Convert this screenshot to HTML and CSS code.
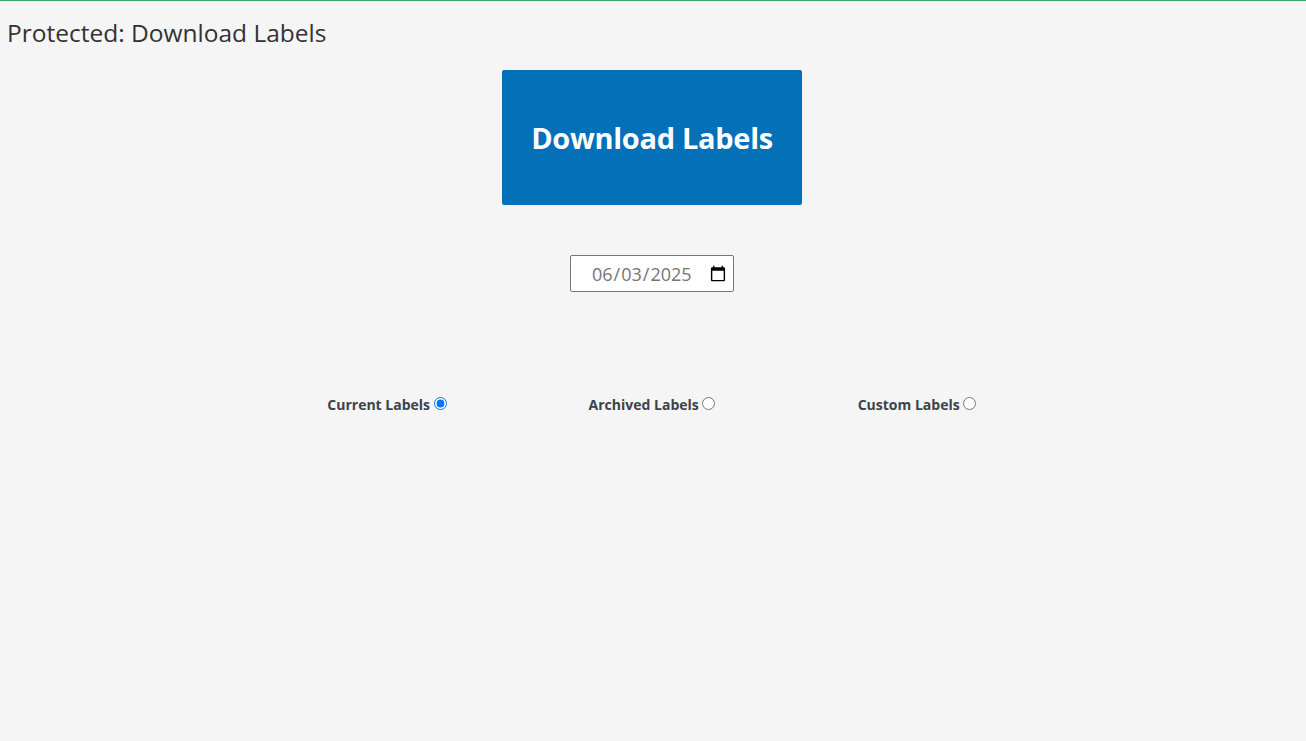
FILE: index.html
```html
<!DOCTYPE html>
<html lang="en">
<head>
<meta charset="utf-8">
<title>Protected: Download Labels</title>
<link rel="stylesheet" href="styles.css">
</head>
<body>
<div class="topline"></div>
<h1 class="page-title">Protected: Download Labels</h1>
<div class="center">
  <button class="download-btn" type="button">Download Labels</button>
  <input class="date-input" type="date" value="2025-06-03">
</div>
<div class="options">
  <label class="opt">Current Labels <input type="radio" name="labels" checked></label>
  <label class="opt">Archived Labels <input type="radio" name="labels"></label>
  <label class="opt">Custom Labels <input type="radio" name="labels"></label>
</div>
</body>
</html>
```
FILE: styles.css
```css
html, body {
  margin: 0;
  padding: 0;
  background: #f5f5f5;
}
body {
  font-family: "Open Sans", "Noto Sans", "Liberation Sans", sans-serif;
  color: #3c434a;
  min-height: 741px;
}
.topline {
  height: 1px;
  background: #3aa860;
}
.page-title {
  margin: 0;
  padding: 16px 0 0 7px;
  font-size: 24.5px;
  font-weight: 400;
  line-height: 32px;
  color: #333;
  letter-spacing: 0;
}
.center {
  display: flex;
  flex-direction: column;
  align-items: center;
  padding-top: 21px;
  padding-right: 2px;
}
.download-btn {
  width: 300px;
  height: 135px;
  background: #0370b7;
  color: #fff;
  border: none;
  border-radius: 2px;
  font-family: "Open Sans", "Noto Sans", sans-serif;
  font-size: 29px;
  font-weight: 700;
  letter-spacing: -0.3px;
}
.date-input {
  margin-top: 50px;
  width: 164px;
  height: 37px;
  box-sizing: border-box;
  border: 1px solid #767676;
  border-radius: 2px;
  background: #fff;
  padding: 0 4px 0 20px;
  font-family: "Open Sans", "Noto Sans", sans-serif;
  font-size: 18px;
  color: #757575;
}
.options {
  display: grid;
  grid-template-columns: repeat(3, 265px);
  justify-content: center;
  margin-top: 103px;
  padding-right: 2px;
}
.opt {
  text-align: center;
  font-size: 14px;
  font-weight: 700;
  color: #3c434a;
  letter-spacing: 0;
}
.opt input {
  margin: 0;
  width: 13px;
  height: 13px;
  vertical-align: 0;
}
```
